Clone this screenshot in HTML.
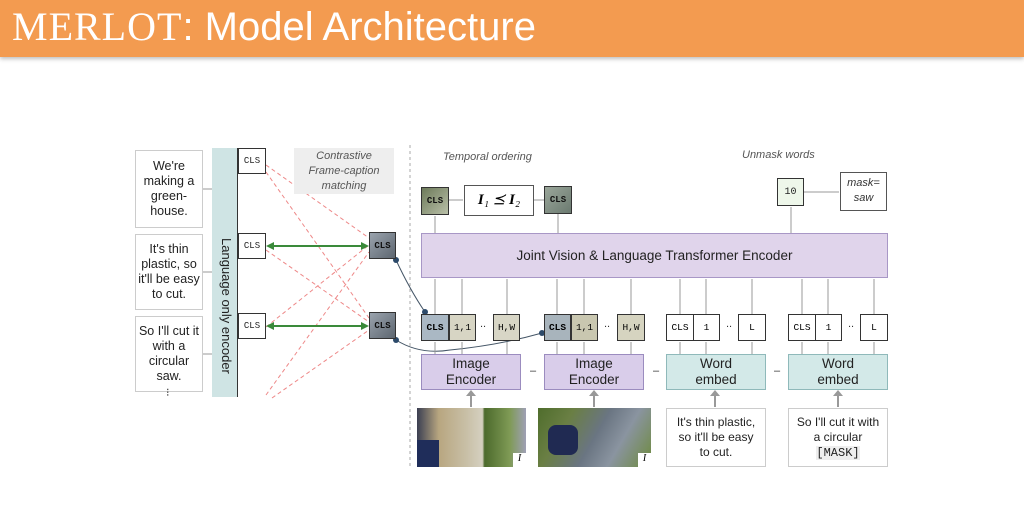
<!DOCTYPE html>
<html><head><meta charset="utf-8"><style>
*{margin:0;padding:0;box-sizing:border-box}
body{width:1024px;height:529px;background:#fff;position:relative;overflow:hidden;font-family:"Liberation Sans",sans-serif}
.hd{position:absolute;left:0;top:0;width:1024px;height:57px;background:#f39b50;box-shadow:0 2px 4px rgba(0,0,0,.25)}
.ht{position:absolute;left:12px;top:3px;color:#fff;font-size:40px;white-space:nowrap}
.a{position:absolute}
.tb{position:absolute;border:1px solid #ccc;background:#fff;text-align:center;font-size:12.5px;line-height:15px;color:#222;display:flex;align-items:center;justify-content:center}
.cls{position:absolute;border:1.5px solid #333;background:#fff;font-family:"Liberation Mono",monospace;font-size:9px;display:flex;align-items:center;justify-content:center;color:#222}
.ic{background:linear-gradient(135deg,#9aa3ad,#5d6670);font-weight:bold;color:#111}
.tok{position:absolute;border:1.5px solid #333;font-family:"Liberation Mono",monospace;font-size:9.5px;display:flex;align-items:center;justify-content:center;height:27px;top:314px;background:#fff}
.enc{position:absolute;top:354px;height:36px;border:1.5px solid #9b8cbf;background:#d9cdea;text-align:center;font-size:13.5px;line-height:16px;display:flex;align-items:center;justify-content:center;color:#222}
.we{background:#d3e9e8;border-color:#8fb9ba}
.it{position:absolute;font-style:italic;font-size:11px;color:#555}
.dot{position:absolute;font-size:11px;color:#333}
</style></head><body>
<div class="hd"><div class="ht"><span style="font-family:'Liberation Serif',serif;letter-spacing:1px">MERLOT</span>: Model Architecture</div></div>

<svg class="a" style="left:0;top:0" width="1024" height="529">
<line x1="410" y1="145" x2="410" y2="466" stroke="#aaa" stroke-dasharray="3,3"/>
<g stroke="#e88" stroke-dasharray="4,3" fill="none" stroke-width="1">
<line x1="266" y1="165" x2="369" y2="238"/><line x1="266" y1="172" x2="369" y2="318"/>
<line x1="266" y1="250" x2="369" y2="322"/><line x1="266" y1="327" x2="369" y2="245"/>
<line x1="266" y1="395" x2="369" y2="252"/><line x1="272" y1="398" x2="369" y2="330"/>
</g>
<g stroke="#3a8a3a" stroke-width="2"><line x1="270" y1="246" x2="366" y2="246"/><line x1="270" y1="326" x2="366" y2="326"/></g>
<polygon points="266,246 274,242 274,250" fill="#3a8a3a"/><polygon points="369,246 361,242 361,250" fill="#3a8a3a"/>
<polygon points="266,326 274,322 274,330" fill="#3a8a3a"/><polygon points="369,326 361,322 361,330" fill="#3a8a3a"/>
<g stroke="#445566" fill="none" stroke-width="1"><path d="M396 260 Q410 290 425 312"/><path d="M396 340 Q420 355 450 350 Q500 345 542 333"/></g>
<g fill="#2c4a6a"><circle cx="396" cy="260" r="3"/><circle cx="425" cy="312" r="3"/><circle cx="396" cy="340" r="3"/><circle cx="542" cy="333" r="3"/></g>
<g stroke="#999" stroke-width="1">
<line x1="203" y1="189" x2="212" y2="189"/><line x1="203" y1="272" x2="212" y2="272"/><line x1="203" y1="354" x2="212" y2="354"/>
<line x1="435" y1="233" x2="435" y2="216"/><line x1="558" y1="233" x2="558" y2="214"/><line x1="791" y1="233" x2="791" y2="207"/>
<line x1="449" y1="200" x2="463" y2="200"/><line x1="534" y1="200" x2="544" y2="200"/><line x1="804" y1="192" x2="839" y2="192"/>
<line x1="435" y1="314" x2="435" y2="279"/><line x1="462" y1="314" x2="462" y2="279"/><line x1="507" y1="314" x2="507" y2="279"/>
<line x1="557" y1="314" x2="557" y2="279"/><line x1="584" y1="314" x2="584" y2="279"/><line x1="631" y1="314" x2="631" y2="279"/>
<line x1="680" y1="314" x2="680" y2="279"/><line x1="706" y1="314" x2="706" y2="279"/><line x1="752" y1="314" x2="752" y2="279"/>
<line x1="802" y1="314" x2="802" y2="279"/><line x1="828" y1="314" x2="828" y2="279"/><line x1="874" y1="314" x2="874" y2="279"/>
<line x1="435" y1="354" x2="435" y2="342"/><line x1="462" y1="354" x2="462" y2="342"/><line x1="507" y1="354" x2="507" y2="342"/>
<line x1="557" y1="354" x2="557" y2="342"/><line x1="584" y1="354" x2="584" y2="342"/><line x1="631" y1="354" x2="631" y2="342"/>
<line x1="680" y1="354" x2="680" y2="342"/><line x1="706" y1="354" x2="706" y2="342"/><line x1="752" y1="354" x2="752" y2="342"/>
<line x1="802" y1="354" x2="802" y2="342"/><line x1="828" y1="354" x2="828" y2="342"/><line x1="874" y1="354" x2="874" y2="342"/>
</g>
<g stroke="#999" stroke-width="2"><line x1="471" y1="407" x2="471" y2="394"/><line x1="594" y1="407" x2="594" y2="394"/><line x1="715" y1="407" x2="715" y2="394"/><line x1="838" y1="407" x2="838" y2="394"/></g>
<g fill="#999"><polygon points="466,396 476,396 471,390"/><polygon points="589,396 599,396 594,390"/><polygon points="710,396 720,396 715,390"/><polygon points="833,396 843,396 838,390"/></g>
</svg>

<div class="tb" style="left:135px;top:150px;width:68px;height:78px">We're<br>making a<br>green-<br>house.</div>
<div class="tb" style="left:135px;top:234px;width:68px;height:76px">It's thin<br>plastic, so<br>it'll be easy<br>to cut.</div>
<div class="tb" style="left:135px;top:316px;width:68px;height:76px">So I'll cut it<br>with a<br>circular<br>saw.</div>
<div class="dot" style="left:166px;top:386px">⁝</div>
<div class="a" style="left:212px;top:148px;width:26px;height:249px;background:#cfe4e4;border-right:1.5px solid #333"></div>
<div class="a" style="left:234px;top:238px;width:150px;height:18px;transform-origin:0 0;transform:rotate(90deg);font-size:13px;color:#222;white-space:nowrap">Language only encoder</div>
<div class="cls" style="left:238px;top:148px;width:28px;height:26px">CLS</div>
<div class="cls" style="left:238px;top:233px;width:28px;height:26px">CLS</div>
<div class="cls" style="left:238px;top:313px;width:28px;height:26px">CLS</div>
<div class="cls ic" style="left:369px;top:232px;width:27px;height:27px">CLS</div>
<div class="cls ic" style="left:369px;top:312px;width:27px;height:27px">CLS</div>
<div class="it" style="left:294px;top:148px;width:100px;height:46px;background:#eee;text-align:center;line-height:15px;padding-top:1px">Contrastive<br>Frame-caption<br>matching</div>

<div class="it" style="left:443px;top:151px">Temporal ordering</div>
<div class="it" style="left:742px;top:149px">Unmask words</div>
<div class="cls ic" style="left:421px;top:187px;width:28px;height:28px;background:linear-gradient(135deg,#6d7a5a,#b9c0a8)">CLS</div>
<div class="a" style="left:464px;top:185px;width:70px;height:31px;border:1px solid #555;font-family:'Liberation Serif',serif;font-style:italic;font-size:15px;text-align:center;line-height:29px"><b>I</b>₁ ⪯ <b>I</b>₂</div>
<div class="cls ic" style="left:544px;top:186px;width:28px;height:28px;background:linear-gradient(135deg,#9aa69a,#6b7a70)">CLS</div>
<div class="cls" style="left:777px;top:178px;width:27px;height:28px;background:#eef7ea;font-size:10px">10</div>
<div class="a" style="left:840px;top:172px;width:47px;height:39px;border:1.5px solid #555;font-style:italic;font-size:11px;text-align:center;line-height:15px;padding-top:3px;color:#333">mask=<br>saw</div>

<div class="a" style="left:421px;top:233px;width:467px;height:45px;background:#e0d4eb;border:1.5px solid #a897c6;text-align:center;line-height:43px;font-size:13.5px;color:#222">Joint Vision &amp; Language Transformer Encoder</div>

<div class="tok" style="left:421px;width:28px;background:#aab8c4;font-weight:bold">CLS</div>
<div class="tok" style="left:449px;width:27px;background:#d7d5c4">1,1</div>
<div class="dot" style="left:480px;top:318px">..</div>
<div class="tok" style="left:493px;width:27px;background:#d8d6c6">H,W</div>
<div class="tok" style="left:544px;width:27px;background:#a8b4bc;font-weight:bold">CLS</div>
<div class="tok" style="left:571px;width:27px;background:#c9c7b0">1,1</div>
<div class="dot" style="left:604px;top:318px">..</div>
<div class="tok" style="left:617px;width:28px;background:#d6d4c0">H,W</div>
<div class="tok" style="left:666px;width:28px">CLS</div>
<div class="tok" style="left:693px;width:27px">1</div>
<div class="dot" style="left:726px;top:318px">..</div>
<div class="tok" style="left:738px;width:28px">L</div>
<div class="tok" style="left:788px;width:28px">CLS</div>
<div class="tok" style="left:815px;width:27px">1</div>
<div class="dot" style="left:848px;top:318px">..</div>
<div class="tok" style="left:860px;width:28px">L</div>

<div class="enc" style="left:421px;width:100px">Image<br>Encoder</div>
<div class="enc" style="left:544px;width:100px">Image<br>Encoder</div>
<div class="enc we" style="left:666px;width:100px">Word<br>embed</div>
<div class="enc we" style="left:788px;width:100px">Word<br>embed</div>
<div class="dot" style="left:530px;top:365px">–</div><div class="dot" style="left:653px;top:365px">–</div><div class="dot" style="left:774px;top:365px">–</div>

<div class="a" style="left:417px;top:408px;width:109px;height:59px;background:linear-gradient(90deg,#3b3f52 0,#b8a680 20%,#c8bfa6 45%,#d5d0c0 60%,#4c6a2c 62%,#7f9a55 85%,#9fa0b5 100%)"></div>
<div class="a" style="left:417px;top:440px;width:22px;height:27px;background:#1f2d5a"></div>
<div class="a" style="left:513px;top:453px;width:13px;height:14px;background:#fff;font-family:'Liberation Serif',serif;font-style:italic;font-size:10px;text-align:center">I</div>
<div class="a" style="left:538px;top:408px;width:113px;height:59px;background:linear-gradient(120deg,#4f6d2c 0,#6a7f44 25%,#6a7582 50%,#8a94a0 70%,#6d8a3c 100%)"></div>
<div class="a" style="left:548px;top:425px;width:30px;height:30px;background:#202a52;border-radius:8px"></div>
<div class="a" style="left:638px;top:453px;width:13px;height:14px;background:#fff;font-family:'Liberation Serif',serif;font-style:italic;font-size:10px;text-align:center">I</div>
<div class="tb" style="left:666px;top:408px;width:100px;height:59px;font-size:12px">It's thin plastic,<br>so it'll be easy<br>to cut.</div>
<div class="tb" style="left:788px;top:408px;width:100px;height:59px;font-size:12px;display:block;padding-top:6px">So I'll cut it with<br>a circular<br><span style="font-family:'Liberation Mono',monospace;background:#eee">[MASK]</span></div>
</body></html>
